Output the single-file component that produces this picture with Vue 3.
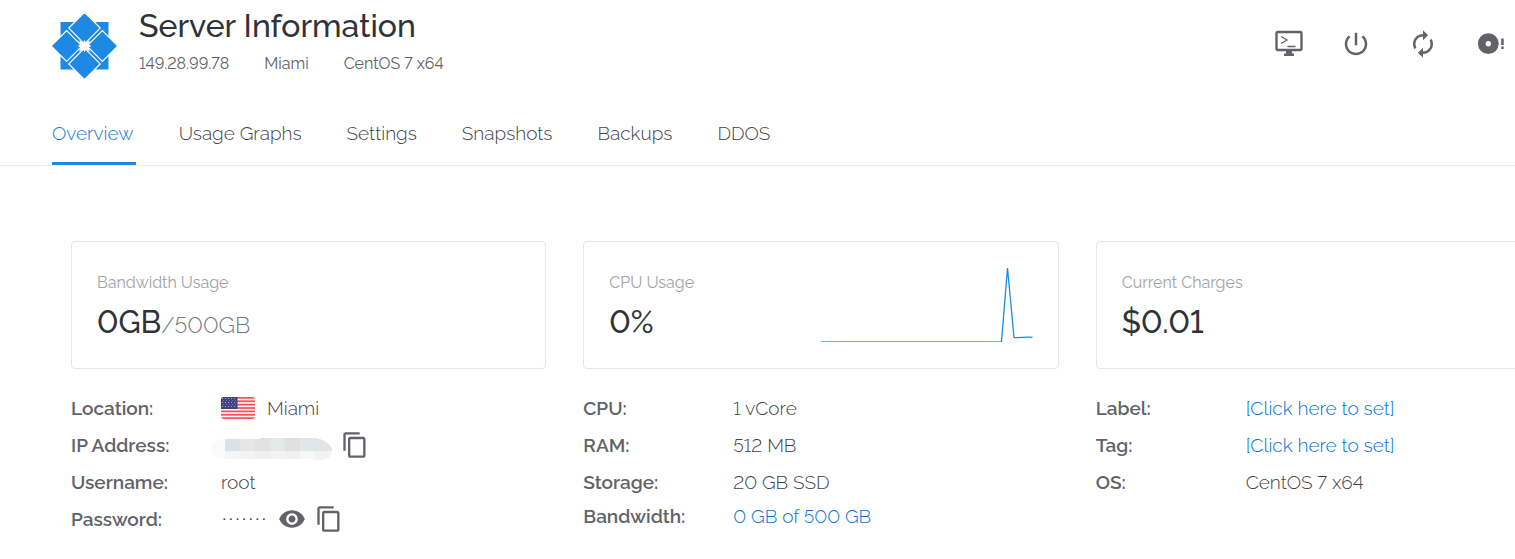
<script setup>
const tabs = ['Overview', 'Usage Graphs', 'Settings', 'Snapshots', 'Backups', 'DDOS']
const maskTop = ['#fafaf9', '#dde1e5', '#e6e6e6', '#e2e2e2', '#e5e8e7', '#e0e0df', '#e3e5e7', '#e3e4e5']
const maskBottom = ['#fcfbfa', '#f3f5f8', '#f3f3f4', '#efefef', '#f3f3f3', '#f0f0f0', '#f6f7f7', '#f2f2f2']
const copyPath = 'M16 1H4c-1.1 0-2 .9-2 2v14h2V3h12V1zm3 4H8c-1.1 0-2 .9-2 2v14c0 1.1.9 2 2 2h11c1.1 0 2-.9 2-2V7c0-1.1-.9-2-2-2zm0 16H8V7h11v14z'
</script>

<template>
  <div class="page">
    <header class="header">
      <svg class="logo" viewBox="0 0 65 66" aria-hidden="true">
        <rect x="8.500" y="9" width="48" height="47.500" fill="#1e88e5" />
        <g fill="#1e88e5" stroke="#fff" stroke-width="1.200">
          <path d="M32.500 -.6 48.200 15.100 32.500 30.800 16.800 15.100z" />
          <path d="M32.500 35.200 48.200 50.900 32.500 66.600 16.800 50.900z" />
          <path d="M-.9 33 14.600 17.500 30.100 33 14.600 48.500z" />
          <path d="M65.900 33 50.400 17.500 34.900 33 50.400 48.500z" />
        </g>
        <path d="M32.500 27 34 29.500 38 27.500 36.500 31.500 39.500 33 36.500 34.500 38 38.500 34 36.500 32.500 39 31 36.500 27 38.500 28.500 34.500 25.500 33 28.500 31.500 27 27.500 31 29.500z" fill="#fff" />
      </svg>
      <div class="heading">
        <h1>Server Information</h1>
        <div class="facts"><span>149.28.99.78</span><span>Miami</span><span>CentOS 7 x64</span></div>
      </div>
      <div class="actions">
        <button type="button" aria-label="View console">
          <svg viewBox="0 0 30 30"><rect x="2.500" y="3" width="25" height="18" rx="1.500" fill="none" stroke="#616368" stroke-width="2.400" /><path d="M12 22h6v2.500h2V27H10v-2.500h2z" fill="#616368" /><path d="M7 7.500l6 3.500-6 3.500M13.500 17.500h8" fill="none" stroke="#616368" stroke-width="1.300" /></svg>
        </button>
        <button type="button" aria-label="Stop server">
          <svg viewBox="0 0 24 24"><path d="M13 3h-2v10h2V3zm4.830 2.170l-1.420 1.420C17.990 7.860 19 9.810 19 12c0 3.870-3.130 7-7 7s-7-3.130-7-7c0-2.190 1.010-4.140 2.580-5.420L6.170 5.170C4.230 6.820 3 9.260 3 12c0 4.970 4.030 9 9 9s9-4.030 9-9c0-2.740-1.230-5.180-3.170-6.830z" /></svg>
        </button>
        <button type="button" aria-label="Restart server">
          <svg viewBox="0 0 24 24"><path d="M12 6v3l4-4-4-4v3c-4.420 0-8 3.580-8 8 0 1.570.46 3.030 1.240 4.260L6.700 14.800c-.45-.83-.7-1.790-.7-2.800 0-3.310 2.690-6 6-6zm6.760 1.740L17.300 9.200c.44.84.7 1.790.7 2.800 0 3.310-2.690 6-6 6v-3l-4 4 4 4v-3c4.420 0 8-3.580 8-8 0-1.570-.46-3.030-1.240-4.260z" /></svg>
        </button>
        <button type="button" aria-label="Reinstall server">
          <svg viewBox="0 0 30 30"><path fill-rule="evenodd" d="M13.300 4.300a10.400 10.400 0 1 1 0 20.800a10.400 10.400 0 1 1 0-20.800zm0 7.700a2.700 2.700 0 1 0 0 5.400a2.700 2.700 0 1 0 0-5.400z" /><path d="M26.200 9.500h2.500v6.500h-2.500zM26.200 17.500h2.500V20h-2.500z" /></svg>
        </button>
      </div>
    </header>

    <nav class="tabs">
      <a v-for="(tab, i) in tabs" :key="tab" href="#" :class="{ active: i === 0 }">{{ tab }}</a>
    </nav>

    <main class="columns">
      <section>
        <div class="card">
          <div>
            <h2>Bandwidth Usage</h2>
            <p class="value">0GB<span>/500GB</span></p>
          </div>
        </div>
        <dl>
          <div>
            <dt>Location:</dt>
            <dd>
              <svg class="flag" viewBox="0 0 34 22" aria-hidden="true">
                <defs>
                  <clipPath id="flag-shape"><rect width="34" height="22" rx="3" /></clipPath>
                  <pattern id="stars" width="3" height="4" patternUnits="userSpaceOnUse"><path d="M1 1h1v1H1zM2.500 3h1v1h-1z" fill="#9d9fce" /></pattern>
                </defs>
                <g clip-path="url(#flag-shape)">
                  <rect width="34" height="22" fill="#f5f5f5" />
                  <rect v-for="n in 7" :key="n" :y="(n - 1) * 3.385" width="34" height="1.700" fill="#ff4b55" />
                  <rect width="16.500" height="12" fill="#41437f" />
                  <rect x="1" y="1" width="15" height="10" fill="url(#stars)" />
                </g>
              </svg>
              <span>Miami</span>
            </dd>
          </div>
          <div>
            <dt>IP Address:</dt>
            <dd>
              <svg class="mask" viewBox="0 0 122 22" role="img" aria-label="Hidden address">
                <clipPath id="mask-shape"><path d="M14 1h34l1-1h54c10 1 15 5 19 12-2 7-6 10-13 10-4 0-7 0-8-1H14C4 21 0 16 0 11S5 1 14 1z" /></clipPath>
                <g clip-path="url(#mask-shape)">
                  <rect v-for="(c, i) in maskTop" :key="'t' + i" :x="i * 15 - 1" width="17" height="13" :fill="c" />
                  <rect v-for="(c, i) in maskBottom" :key="'b' + i" :x="i * 15 - 1" y="13" width="17" height="9" :fill="c" />
                </g>
              </svg>
              <button type="button" aria-label="Copy IP address"><svg viewBox="0 0 24 24"><path :d="copyPath" /></svg></button>
            </dd>
          </div>
          <div><dt>Username:</dt><dd>root</dd></div>
          <div>
            <dt>Password:</dt>
            <dd>
              <span class="dots">·······</span>
              <button type="button" aria-label="Show password"><svg viewBox="0 0 24 24"><path d="M12 4.500C7 4.500 2.730 7.610 1 12c1.730 4.390 6 7.500 11 7.500s9.270-3.110 11-7.500c-1.730-4.390-6-7.500-11-7.500zM12 17c-2.760 0-5-2.240-5-5s2.240-5 5-5 5 2.240 5 5-2.240 5-5 5zm0-8c-1.660 0-3 1.340-3 3s1.340 3 3 3 3-1.340 3-3-1.340-3-3-3z" /></svg></button>
              <button type="button" aria-label="Copy password"><svg viewBox="0 0 24 24"><path :d="copyPath" /></svg></button>
            </dd>
          </div>
        </dl>
      </section>

      <section>
        <div class="card">
          <div>
            <h2>CPU Usage</h2>
            <p class="value">0%</p>
          </div>
          <svg class="chart" viewBox="0 0 212 76" aria-hidden="true">
            <path d="M0 74.500H181" stroke="#67b0ee" stroke-width="1" />
            <path d="M180.500 74.500 186.500 1 193 70.500C199 71 202 69.800 211.500 70.300" fill="none" stroke="#1e88e5" stroke-width="1.300" />
          </svg>
        </div>
        <dl>
          <div><dt>CPU:</dt><dd>1 vCore</dd></div>
          <div><dt>RAM:</dt><dd>512 MB</dd></div>
          <div><dt>Storage:</dt><dd>20 GB SSD</dd></div>
          <div class="compact"><dt>Bandwidth:</dt><dd><a href="#">0 GB of 500 GB</a></dd></div>
        </dl>
      </section>

      <section>
        <div class="card">
          <div>
            <h2>Current Charges</h2>
            <p class="value">$0.01</p>
          </div>
        </div>
        <dl>
          <div><dt>Label:</dt><dd><a href="#">[Click here to set]</a></dd></div>
          <div><dt>Tag:</dt><dd><a href="#">[Click here to set]</a></dd></div>
          <div><dt>OS:</dt><dd>CentOS 7 x64</dd></div>
        </dl>
      </section>
    </main>
  </div>
</template>

<style>
body { margin: 0; background: #fff; }
</style>

<style scoped>
.page { overflow: hidden; font-family: Raleway, Lato, "Open Sans", sans-serif; font-size: 19px; font-weight: 300; font-variant-numeric: lining-nums; color: #3f4247; }
h1, h2, p, dl, dd { margin: 0; }
a { color: #0073dc; text-decoration: none; }
button { display: flex; padding: 0; border: 0; background: none; cursor: pointer; }
button svg { display: block; width: 100%; fill: #616368; }
.header { display: flex; padding: 8px 10px 0 52px; }
.logo { width: 65px; height: 66px; margin: 5px 22px 0 0; }
h1 { font-size: 32px; font-weight: 500; line-height: 36px; color: #2f3337; }
.facts { display: flex; gap: 35px; margin-top: 8px; font-size: 16px; font-weight: 400; line-height: 24px; color: #616368; }
.actions { display: flex; gap: 37px; margin: 21px 0 0 auto; align-items: flex-start; }
.actions button { width: 30px; }
.tabs { display: flex; gap: 43px; margin-top: 22px; padding-left: 52px; border-bottom: 1px solid #e9eaec; }
.tabs a { padding: 20px 2px 17px 0; line-height: 24px; color: inherit; border-bottom: 3px solid transparent; }
.tabs a.active { color: #0f78dd; border-color: #1e88e5; }
.columns { display: grid; grid-template-columns: repeat(3, 1fr); gap: 37px; margin: 75px -56px 0 71px; }
.card { display: flex; justify-content: space-between; box-sizing: border-box; min-height: 128px; padding: 25px; border: 1px solid #e5e6e8; border-radius: 4px; }
h2 { font-size: 16px; font-weight: 400; line-height: 32px; color: #a0a3a7; }
.value { margin-top: 2px; font-size: 31px; font-weight: 500; line-height: 42px; color: #2f3337; }
.value span { font-size: 23px; font-weight: 300; line-height: 24px; color: #73797f; }
.chart { width: 212px; height: 76px; }
dl { margin-top: 20px; }
dl > div { display: flex; align-items: center; height: 37px; }
dl > .compact { height: 31px; }
dt { width: 150px; font-weight: 600; color: #616368; }
dd { display: flex; align-items: center; }
dd button { width: 28px; }
.flag { width: 34px; height: 22px; margin-right: 12px; }
.mask { width: 122px; height: 22px; margin: 8px 8px 0 -10px; }
.dots { margin-right: 11px; font-family: "Liberation Mono", monospace; font-size: 11px; font-weight: 700; }
dd button + button { margin-left: 9px; }
</style>
